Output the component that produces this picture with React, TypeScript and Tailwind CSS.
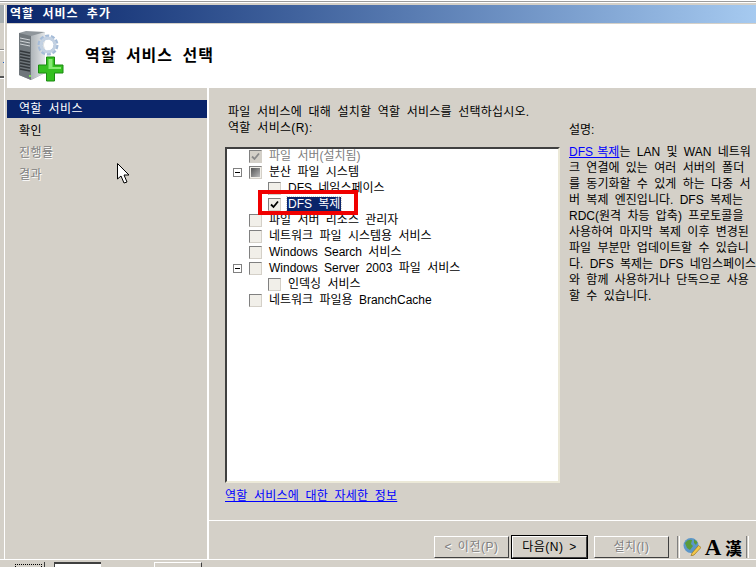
const rows = [
  { label: '파일 서버(설치됨)', level: 0, state: 'grayed-check' },
  { label: '분산 파일 시스템', level: 0, state: 'mixed', toggle: true },
  { label: 'DFS 네임스페이스', level: 1, state: 'off' },
  { label: 'DFS 복제', level: 1, state: 'on', selected: true },
  { label: '파일 서버 리소스 관리자', level: 0, state: 'off' },
  { label: '네트워크 파일 시스템용 서비스', level: 0, state: 'off' },
  { label: 'Windows Search 서비스', level: 0, state: 'off' },
  { label: 'Windows Server 2003 파일 서비스', level: 0, state: 'off', toggle: true },
  { label: '인덱싱 서비스', level: 1, state: 'off' },
  { label: '네트워크 파일용 BranchCache', level: 0, state: 'off' },
];

const steps = [
  { label: '역할 서비스', className: 'bg-[#0a246a] text-white pl-3' },
  { label: '확인', className: 'text-black pl-3' },
  { label: '진행률', className: 'text-[#808080] pl-3 [text-shadow:1px_1px_0_#fff]' },
  { label: '결과', className: 'text-[#808080] pl-3 [text-shadow:1px_1px_0_#fff]' },
];

function CheckBox({ state }: { state: string }) {
  const grayed = state === 'grayed-check';
  return (
    <span className={`w-[13px] h-[13px] shrink-0 flex items-center justify-center border-t border-l border-t-[#808080] border-l-[#808080] border-r border-b border-r-[#d4d0c8] border-b-[#d4d0c8] ${grayed ? 'bg-[#d4d0c8]' : 'bg-[#f1efe9]'}`}>
      {state === 'mixed' && <span className="w-[9px] h-[9px] bg-gradient-to-br from-[#555] to-[#bbb]" />}
      {(state === 'on' || grayed) && (
        <svg width="9" height="9" viewBox="0 0 9 9">
          <path d="M1 4.5 L3.5 7 L8 1.5" fill="none" stroke={grayed ? '#8a8a8a' : '#000'} strokeWidth="1.8" />
        </svg>
      )}
    </span>
  );
}

function Toggle() {
  return (
    <span className="absolute left-[6px] top-[4px] w-[9px] h-[9px] border border-[#808080] bg-white flex items-center justify-center">
      <span className="w-[5px] h-px bg-black" />
    </span>
  );
}

function TreeRow({ label, level, state, toggle, selected }: { label: string; level: number; state: string; toggle?: boolean; selected?: boolean }) {
  const disabled = state === 'grayed-check';
  return (
    <div className={`relative h-4 flex items-center ${level === 1 ? 'pl-[41px]' : 'pl-[22px]'}`}>
      {toggle && <Toggle />}
      <CheckBox state={state} />
      <span className={`ml-[6px] px-px leading-[15px] whitespace-nowrap ${selected ? 'bg-[#0a246a] text-white outline-1 outline-dotted outline-[#d4d0c8]' : disabled ? 'text-[#808080]' : 'text-black'}`}>
        {label}
      </span>
    </div>
  );
}

function NavButton({ label, primary }: { label: string; primary?: boolean }) {
  return (
    <div className={`w-[75px] h-[22px] flex items-center justify-center border border-t-white border-l-white border-r-[#404040] border-b-[#404040] tracking-[0.5px] [word-spacing:2px] ${primary ? 'outline-1 outline-black text-black' : 'text-[#808080] [text-shadow:1px_1px_0_#fff]'}`}>
      {label}
    </div>
  );
}

function ServerIcon() {
  return (
    <svg width="46" height="51" viewBox="0 0 46 51">
      <defs>
        <linearGradient id="side" x1="0" y1="0" x2="1" y2="0">
          <stop offset="0" stopColor="#aeb4b8" />
          <stop offset="1" stopColor="#e4e7e9" />
        </linearGradient>
      </defs>
      <path d="M1 2 L8 0 L27 1 L27 42 L13 49 L1 44 Z" fill="#8f969b" />
      <path d="M13 5 L27 1 L27 42 L13 49 Z" fill="url(#side)" />
      <path d="M1 2 L13 5 L13 49 L1 44 Z" fill="#6f767b" />
      <path d="M2 7 L12 9 M2 10 L12 12 M2 13 L12 15" stroke="#cfd3d6" strokeWidth="1" />
      <path d="M2 20 L12 22 M2 23 L12 25 M2 26 L12 28 M2 29 L12 31 M2 32 L12 34 M2 35 L12 37 M2 38 L12 40" stroke="#33383c" strokeWidth="1.4" />
      <rect x="11" y="44" width="2" height="2" fill="#7fe05a" />
      <circle cx="30" cy="14" r="8" fill="none" stroke="#a6bcd8" strokeWidth="5" strokeDasharray="3.5 1.5" />
      <circle cx="30" cy="14" r="7" fill="none" stroke="#c3d1e2" strokeWidth="3" />
      <circle cx="30" cy="14" r="4" fill="#fff" />
      <path d="M28.5 26 H36.5 V34 H45 V42 H36.5 V50 H28.5 V42 H20.5 V34 H28.5 Z" fill="#35c020" stroke="#1a8a10" />
      <path d="M30.5 28 H34.5 V36 H43 V38 H30.5 Z" fill="#86ea72" />
    </svg>
  );
}

function GlobeIcon() {
  return (
    <svg width="18" height="18" viewBox="0 0 18 18">
      <circle cx="8" cy="7.5" r="7.5" fill="#5b96c8" />
      <path d="M2 5 Q5 0.5 9 2 L8 6 L10 8 L7 12 L4 10 Z M11 1.5 L14.5 4 L13 7 L11 5 Z" fill="#5a9a3a" />
      <path d="M9 15 L15.5 7.5 L18 9.5 L11 17 L8 18 Z" fill="#f2c64a" stroke="#8a6a1a" strokeWidth="0.6" />
    </svg>
  );
}

export default function App() {
  return (
    <div className="relative w-[756px] h-[567px] overflow-hidden flex flex-col bg-[#d4d0c8] text-[12px] text-black [font-family:'Liberation_Sans','Noto_Sans_CJK_KR',sans-serif] [word-spacing:3px]">
      {/* frame top */}
      <div className="h-[5px] shrink-0 flex flex-col">
        <div className="h-px bg-white" />
        <div className="h-px bg-[#9c9c9c]" />
        <div className="h-px bg-white" />
        <div className="h-[2px] bg-[#d4d0c8]" />
      </div>

      <div className="flex-1 flex min-h-0">
        {/* sliver of the window behind */}
        <div className="w-[7px] shrink-0 flex">
          <div className="w-1 flex flex-col">
            <div className="h-[18px] bg-[#a7aeb0]" />
            <div className="h-[26px]" />
            <div className="h-px bg-[#8c8c8c]" />
            <div className="h-px bg-white" />
            <div className="h-[11px]" />
            <div className="ml-[3px] w-px h-px bg-[#2060c0]" />
            <div className="h-[13px]" />
            <div className="h-[2px] bg-[#555555]" />
            <div className="h-px bg-white" />
          </div>
          <div className="w-px bg-white" />
          <div className="w-[2px] bg-[#d4d0c8]" />
        </div>

        <div className="flex-1 flex flex-col min-w-0">
          <div className="h-[18px] shrink-0 pl-[3px] flex items-center font-bold text-white tracking-[1px] [word-spacing:4px] bg-gradient-to-r from-[#0a246a] to-[#a6caf0]">
            역할 서비스 추가
          </div>
          <div className="h-px shrink-0 bg-[#d4d0c8]" />

          {/* header */}
          <div className="h-[64px] shrink-0 bg-white flex items-center pl-[11px]">
            <ServerIcon />
            <span className="ml-[21px] text-[16px] font-bold tracking-[1px] [word-spacing:4px]">역할 서비스 선택</span>
          </div>

          <div className="flex-1 flex min-h-0">
            {/* wizard steps */}
            <div className="w-[200px] shrink-0 pt-3 flex flex-col gap-1 tracking-[0.4px]">
              {steps.map((s) => (
                <div key={s.label} className={`h-[18px] flex items-center ${s.className}`}>{s.label}</div>
              ))}
            </div>

            <div className="w-[2px] shrink-0 bg-white" />

            <div className="flex-1 flex flex-col min-w-0">
              <div className="h-[432px] shrink-0 flex pl-[16px]">
                <div className="w-[335px] shrink-0 flex flex-col">
                  <div className="ml-[3px] mt-[16px] leading-4 whitespace-nowrap tracking-[0.2px]">파일 서비스에 대해 설치할 역할 서비스를 선택하십시오.</div>
                  <div className="ml-[3px] leading-4 whitespace-nowrap tracking-[0.3px]">역할 서비스(R):</div>
                  <div className="mt-[11px] h-[336px] bg-white border-2 border-t-[#404040] border-l-[#404040] border-r-[#ece9d8] border-b-[#ece9d8] [&>div]:-translate-y-px">
                    {rows.map((r) => (
                      <TreeRow key={r.label} {...r} />
                    ))}
                  </div>
                  <div className="mt-[5px] leading-4 text-[#0000ff] underline whitespace-nowrap tracking-[0.2px]">역할 서비스에 대한 자세한 정보</div>
                </div>

                <div className="ml-[9px] flex-1 min-w-0">
                  <div className="mt-[34px] leading-4">설명:</div>
                  <div className="mt-[6px] leading-4 whitespace-nowrap">
                    <div><span className="text-[#0000ff] underline [word-spacing:1px]">DFS 복제</span>는 LAN 및 WAN 네트워</div>
                    <div>크 연결에 있는 여러 서버의 폴더</div>
                    <div>를 동기화할 수 있게 하는 다중 서</div>
                    <div>버 복제 엔진입니다. DFS 복제는</div>
                    <div>RDC(원격 차등 압축) 프로토콜을</div>
                    <div>사용하여 마지막 복제 이후 변경된</div>
                    <div>파일 부분만 업데이트할 수 있습니</div>
                    <div>다. DFS 복제는 DFS 네임스페이스</div>
                    <div>와 함께 사용하거나 단독으로 사용</div>
                    <div>할 수 있습니다.</div>
                  </div>
                </div>
              </div>

              <div className="h-px shrink-0 bg-white" />

              {/* footer */}
              <div className="flex-1 flex items-start pl-[225px] pt-[15px] [word-spacing:0px]">
                <NavButton label="< 이전(P)" />
                <div className="w-[3px]" />
                <NavButton label="다음(N) >" primary />
                <div className="w-[7px]" />
                <NavButton label="설치(I)" />
                <div className="ml-[8px] w-[3px] h-[22px] border-l border-r border-l-[#808080] border-r-white" />
                <div className="ml-[3px] flex items-center h-[22px]">
                  <GlobeIcon />
                  <span className="ml-[3px] w-[18px] text-[23px] leading-none font-bold text-center [font-family:'Liberation_Serif',serif]">A</span>
                  <span className="ml-[3px] text-[17px] leading-none font-bold [font-family:'Noto_Sans_CJK_TC',sans-serif]">漢</span>
                  <div className="ml-[4px] w-[3px] h-[22px] border-l border-r border-l-[#808080] border-r-white" />
                </div>
              </div>
            </div>
          </div>
        </div>
      </div>

      {/* taskbar sliver */}
      <div className="h-px shrink-0 bg-white" />
      <div className="h-[7px] shrink-0 flex items-start pt-[2px]">
        <div className="w-[45px] h-[5px] border-r border-r-[#404040] pl-[15px] pr-[2px] pt-[2px]">
          <div className="h-full border-t border-l border-r border-dotted border-black" />
        </div>
        <div className="ml-[9px] w-[47px] h-[5px] bg-white border-t-2 border-l border-t-[#404040] border-l-[#404040]" />
        <div className="ml-[53px] w-[48px] h-[5px] border-t border-l border-r border-t-white border-l-white border-r-[#404040]" />
      </div>

      {/* red annotation */}
      <div className="absolute left-[258px] top-[190px] w-[100px] h-[25px] border-4 border-[#f00000] pointer-events-none" />

      {/* mouse pointer */}
      <svg className="absolute left-[117px] top-[163px]" width="14" height="22" viewBox="0 0 14 22">
        <path d="M0.5 0.5 L0.5 16 L4 13 L7 20 L10 19 L7 12 L12 12 Z" fill="#fff" stroke="#000" />
      </svg>
    </div>
  );
}
